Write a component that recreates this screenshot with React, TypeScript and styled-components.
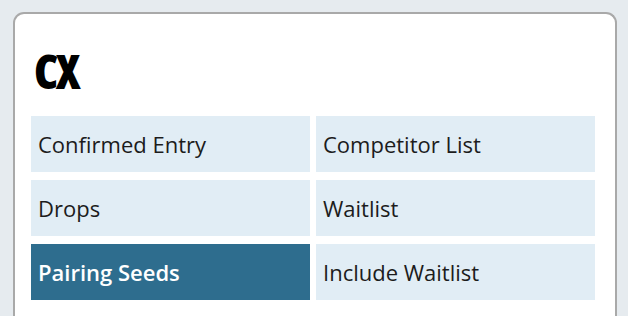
import React from "react";
import styled, { createGlobalStyle } from "styled-components";

const GlobalStyle = createGlobalStyle`
  html, body {
    margin: 0;
    padding: 0;
    background: #e6ebef;
    overflow: hidden;
  }
`;

const Page = styled.div`
  width: 628px;
  height: 316px;
  overflow: hidden;
  box-sizing: border-box;
  padding: 12px 11px 0 13px;
  font-family: "Open Sans", "Liberation Sans", sans-serif;
`;

const Card = styled.section`
  background: #ffffff;
  border: 2px solid #a9a9a9;
  border-bottom: none;
  border-radius: 11px 11px 0 0;
  height: 304px;
  box-sizing: border-box;
  padding: 28px 20px 0 16px;
`;

const Title = styled.h1`
  margin: 0 0 16px 3px;
  font-family: "Open Sans", "Liberation Sans", sans-serif;
  font-stretch: condensed;
  font-weight: 800;
  font-size: 48px;
  line-height: 58px;
  letter-spacing: -2.5px;
  color: #000;
`;

const Grid = styled.div`
  display: grid;
  grid-template-columns: 279px 279px;
  grid-auto-rows: 56px;
  column-gap: 6px;
  row-gap: 8px;
`;

const Cell = styled.div<{ $active?: boolean }>`
  display: flex;
  align-items: center;
  padding: 0 7px;
  background: ${(p) => (p.$active ? "#2e6d8e" : "#e1edf5")};
  color: ${(p) => (p.$active ? "#ffffff" : "#1c1c1c")};
  font-size: 22px;
  font-weight: ${(p) => (p.$active ? 600 : 400)};
`;

const items = [
  { label: "Confirmed Entry" },
  { label: "Competitor List" },
  { label: "Drops" },
  { label: "Waitlist" },
  { label: "Pairing Seeds", active: true },
  { label: "Include Waitlist" },
];

export default function App() {
  return (
    <>
      <GlobalStyle />
      <Page>
        <Card>
          <Title>CX</Title>
          <Grid>
            {items.map((it) => (
              <Cell key={it.label} $active={it.active}>
                {it.label}
              </Cell>
            ))}
          </Grid>
        </Card>
      </Page>
    </>
  );
}
